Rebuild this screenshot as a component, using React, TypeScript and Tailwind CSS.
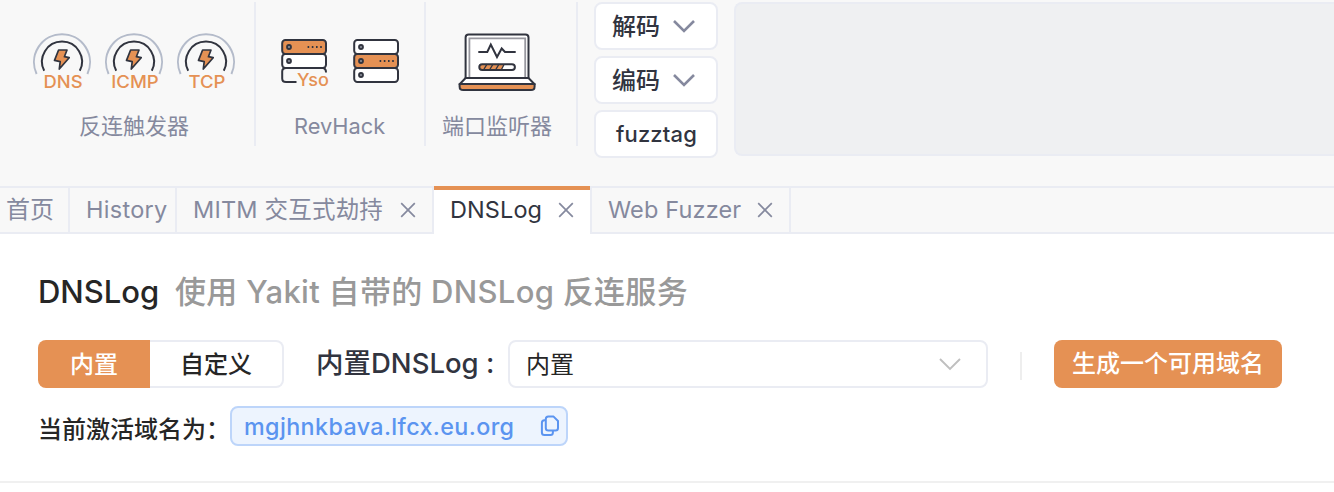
import React from "react";

const INK = "#31343f";
const ORANGE = "#e59154";

function TriggerIcon({ label, width }: { label: string; width: number }) {
  return (
    <svg width="60" height="60" viewBox="32 32 60 60" fill="none" className="block shrink-0">
      <path d="M36.6 74A28 28 0 1 1 87.4 74" stroke="#b4bbca" strokeWidth="2" />
      <path d="M44.2 70.7A20 20 0 1 1 79.8 70.7" stroke={INK} strokeWidth="2" />
      <path
        d="M58.6 50H67L64.4 56.7L69.2 57.7L59.3 69L60.2 61.6L54.5 60.4Z"
        fill={ORANGE}
        stroke={INK}
        strokeWidth="1.7"
        strokeLinejoin="round"
      />
      <text
        x="63"
        y="88"
        textAnchor="middle"
        textLength={width}
        lengthAdjust="spacingAndGlyphs"
        fill={ORANGE}
        className="font-['Inter'] text-[17.5px] font-medium"
      >
        {label}
      </text>
    </svg>
  );
}

function Dots({ y }: { y: number }) {
  return <path d={`M307.6 ${y}h15`} stroke={INK} strokeWidth="1.8" strokeDasharray="1.6 2.6" />;
}

function Knob({ y }: { y: number }) {
  return <circle cx="289" cy={y} r="2" stroke={INK} strokeWidth="1.8" fill="#8b8f9a" />;
}

function YsoIcon() {
  return (
    <svg width="50" height="52" viewBox="280 38 50 52" fill="none" className="block shrink-0">
      <rect x="282.2" y="54" width="43.8" height="14" rx="3.2" fill="#fff" stroke={INK} strokeWidth="2" />
      <rect x="282.2" y="40" width="43.8" height="14" rx="3.2" fill={ORANGE} stroke={INK} strokeWidth="2" />
      <path d="M296.5 82H286Q282.2 82 282.2 78.5V71.5Q282.2 68 286 68H322.5Q326 68 326 72.5" stroke={INK} strokeWidth="2" />
      <Knob y={47} />
      <Knob y={61} />
      <Dots y={47} />
      <text
        x="297"
        y="86.2"
        textLength="32"
        lengthAdjust="spacingAndGlyphs"
        fill={ORANGE}
        className="font-['Inter'] text-[17.5px] font-medium"
      >
        Yso
      </text>
    </svg>
  );
}

function ServerIcon() {
  return (
    <svg width="50" height="52" viewBox="280 38 50 52" fill="none" className="block shrink-0">
      <rect x="282.2" y="40" width="43.8" height="14" rx="3.2" fill="#fff" stroke={INK} strokeWidth="2" />
      <rect x="282.2" y="68" width="43.8" height="14" rx="3.2" fill="#fff" stroke={INK} strokeWidth="2" />
      <rect x="282.2" y="54" width="43.8" height="14" rx="3.2" fill={ORANGE} stroke={INK} strokeWidth="2" />
      <Knob y={47} />
      <Knob y={61} />
      <Knob y={75} />
      <Dots y={61} />
    </svg>
  );
}

function LaptopIcon() {
  return (
    <svg width="80" height="60" viewBox="457 32 80 60" fill="none" className="block shrink-0">
      <path d="M465.6 78V37.5Q465.6 34.4 468.7 34.4H525.4Q528.5 34.4 528.5 37.5V78Z" fill="#fff" stroke={INK} strokeWidth="2" />
      <path d="M469.4 77V38.3H525.2V77" stroke="#98989f" strokeWidth="1.8" />
      <path d="M465.6 78H528.5L534.6 84.2H459.6Z" fill="#fff" stroke={INK} strokeWidth="2" strokeLinejoin="round" />
      <path d="M459.6 84H534.6V86.4Q534.6 90 531 90H463.2Q459.6 90 459.6 86.4Z" fill={ORANGE} stroke={INK} strokeWidth="2" strokeLinejoin="round" />
      <path d="M478.3 52H487.3L490.8 44.5L497 57L501.7 48.5L505 52H515.7" stroke={INK} strokeWidth="2" />
      <rect x="479.3" y="64.2" width="35.6" height="5.8" rx="2.9" fill="#fff" />
      <path d="M482.2 64.2H504L501.5 70H482.2Q479.3 70 479.3 67.1Q479.3 64.2 482.2 64.2Z" fill={ORANGE} />
      <path d="M483.5 70L487 64.2M489.5 70L493 64.2M495.5 70L499 64.2M501.2 70L504.2 64.2" stroke={INK} strokeWidth="1.3" />
      <rect x="479.3" y="64.2" width="35.6" height="5.8" rx="2.9" stroke={INK} strokeWidth="2" />
    </svg>
  );
}

function Chevron({ className }: { className: string }) {
  return (
    <svg width="24" height="14" viewBox="0 0 24 14" fill="none" className={className}>
      <path d="M2 2L12 12L22 2" stroke="currentColor" />
    </svg>
  );
}

function CloseIcon() {
  return (
    <svg width="16" height="16" viewBox="0 0 16 16" fill="none" className="block shrink-0 text-[#85899e]">
      <path d="M1.2 1.2L14.8 14.8M14.8 1.2L1.2 14.8" stroke="currentColor" strokeWidth="1.7" />
    </svg>
  );
}

function CopyIcon() {
  return (
    <svg width="20" height="22" viewBox="0 0 20 22" fill="none" stroke="#5b94f0" strokeWidth="2" className="block shrink-0">
      <path d="M5.8 4.1Q5.8 1.6 8.3 1.6H13.6L18 6V13.1Q18 15.6 15.5 15.6H8.3Q5.8 15.6 5.8 13.1Z" strokeLinejoin="round" />
      <path d="M5.8 5.3H4.4Q1.9 5.3 1.9 7.8V17.4Q1.9 19.9 4.4 19.9H10.4Q12.9 19.9 12.9 17.4V16" />
    </svg>
  );
}

function CodeButton({ children }: { children: React.ReactNode }) {
  return (
    <button className="flex h-12 w-[124px] items-center rounded-lg border-2 border-[#eaecf3] bg-white pl-4 text-2xl font-medium leading-none text-[#31343f]">
      {children}
    </button>
  );
}

function Toolbar() {
  return (
    <header className="flex h-[186px] bg-[#f8f8f8] pt-[2px]">
      <section className="h-36 w-64 shrink-0 border-r-2 border-[#eaecf3] pl-8 pt-[30px]">
        <div className="flex gap-3">
          <TriggerIcon label="DNS" width={39} />
          <TriggerIcon label="ICMP" width={47.5} />
          <TriggerIcon label="TCP" width={37} />
        </div>
        <p className="mt-5 pl-[47px] text-[22px] leading-[28px] text-[#85899e]">反连触发器</p>
      </section>
      <section className="h-36 w-[170px] shrink-0 border-r-2 border-[#eaecf3] pl-6 pt-9">
        <div className="flex gap-[22px]">
          <YsoIcon />
          <ServerIcon />
        </div>
        <p className="mt-[22px] pl-[14px] text-[21.8px] leading-[28px] text-[#85899e]">RevHack</p>
      </section>
      <section className="h-36 w-[152px] shrink-0 border-r-2 border-[#eaecf3] pt-[30px]">
        <div className="pl-[31px]">
          <LaptopIcon />
        </div>
        <p className="mt-5 pl-4 text-[22px] leading-[28px] text-[#85899e]">端口监听器</p>
      </section>
      <div className="ml-4 flex shrink-0 flex-col gap-[6px]">
        <CodeButton>
          <span className="pt-[2px]">解码</span>
          <Chevron className="ml-3 block shrink-0 stroke-[2.6px] text-[#85899e]" />
        </CodeButton>
        <CodeButton>
          <span className="pt-[2px]">编码</span>
          <Chevron className="ml-3 block shrink-0 stroke-[2.6px] text-[#85899e]" />
        </CodeButton>
        <CodeButton>
          <span className="pl-1 text-[22px] tracking-[0.15px]">fuzztag</span>
        </CodeButton>
      </div>
      <div className="ml-4 h-[154px] flex-1 rounded-l-lg border-2 border-r-0 border-[#eaecf3] bg-[#eff0f2]" />
    </header>
  );
}

function Tabs() {
  const tab = "flex shrink-0 items-center border-b-2 border-r-2 border-t-2 border-[#eaecf3] whitespace-nowrap";
  return (
    <nav className="flex h-12 bg-[#f8f8f8] text-[23.5px] leading-none text-[#85899e]">
      <div className={`${tab} w-[70px] pl-[6px] text-2xl leading-none`}>首页</div>
      <div className={`${tab} w-[107px] pl-4 tracking-[0.3px]`}>History</div>
      <div className={`${tab} w-[257px] pl-4`}>
        <span className="w-[207px] tracking-[0.2px]">MITM 交互式劫持</span>
        <CloseIcon />
      </div>
      <div className="flex w-[156px] shrink-0 items-center border-t-4 border-[#e59154] bg-white pb-1 pl-4 text-[#31343f]">
        <span className="w-[108px] tracking-[0.1px]">DNSLog</span>
        <CloseIcon />
      </div>
      <div className={`${tab} w-[201px] border-l-2 pl-4`}>
        <span className="w-[149px] tracking-[0.15px]">Web Fuzzer</span>
        <CloseIcon />
      </div>
      <div className="flex-1 border-y-2 border-[#eaecf3]" />
    </nav>
  );
}

export default function App() {
  return (
    <div className="h-[492px] w-[1334px] overflow-hidden bg-white font-['Inter','Noto_Sans_CJK_SC',sans-serif]">
      <Toolbar />
      <Tabs />
      <main className="h-[249px] border-b-2 border-[#f0f0f0] pl-[38px] pt-[37px] text-[#262626]">
        <h1 className="flex h-10 items-center whitespace-nowrap leading-none">
          <span className="w-[137px] text-[31px] font-medium">DNSLog</span>
          <span className="text-[31px] font-medium tracking-[0.3px] text-[#999999]">使用 Yakit 自带的 DNSLog 反连服务</span>
        </h1>
        <div className="mt-[29px] flex h-12 items-center text-2xl leading-none">
          <div className="flex h-12 w-[246px] font-medium">
            <button className="w-28 rounded-l-lg bg-[#e59154] pt-[2px] text-white">内置</button>
            <button className="flex-1 rounded-r-lg border-2 border-l-0 border-[#eaecf3] pt-[2px]">自定义</button>
          </div>
          <label className="ml-8 w-48 whitespace-nowrap text-[27.5px] font-medium text-[#31343f]">内置DNSLog :</label>
          <div className="flex h-12 w-[480px] items-center justify-between rounded-lg border-2 border-[#eaecf3] pl-4 pr-6">
            <span className="pt-[2px]">内置</span>
            <Chevron className="block shrink-0 stroke-[1.9px] text-[#bfbfbf]" />
          </div>
          <div className="ml-8 mt-1 h-7 w-[2px] bg-[#eeeeee]" />
          <button className="ml-8 h-12 w-[228px] rounded-lg bg-[#e59154] font-medium text-white">生成一个可用域名</button>
        </div>
        <div className="mt-[18px] flex h-10 items-center leading-none">
          <span className="w-48 whitespace-nowrap pt-2 text-2xl font-medium">当前激活域名为：</span>
          <div className="flex h-10 w-[338px] items-center justify-between rounded-lg border-2 border-[#bdd5fa] bg-[#edf4fe] pl-3 pr-[6px] text-[23.3px] font-medium tracking-[0.38px] text-[#5b94f0]">
            <span className="pt-[2px]">mgjhnkbava.lfcx.eu.org</span>
            <CopyIcon />
          </div>
        </div>
      </main>
    </div>
  );
}
